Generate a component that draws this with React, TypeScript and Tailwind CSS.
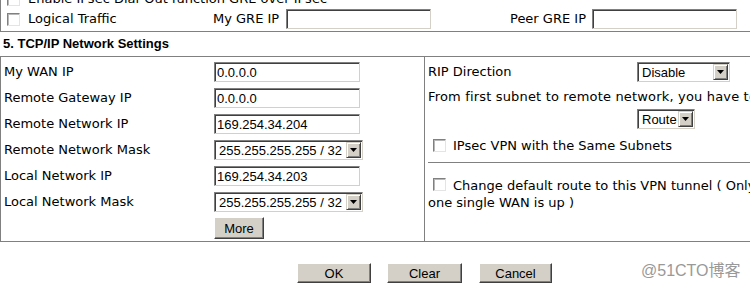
import React from "react";

function Checkbox({ className = "" }: { className?: string }) {
  return (
    <span
      className={`inline-block w-[13px] h-[13px] shrink-0 bg-white border border-t-[#808080] border-l-[#808080] border-r-[#e4e4e4] border-b-[#e4e4e4] shadow-[inset_1px_1px_0_#b8b8b8] ${className}`}
    />
  );
}

function TextBox({ value = "", w }: { value?: string; w: string }) {
  return (
    <div
      className={`${w} h-[20px] shrink-0 flex items-center bg-white border border-t-[#808080] border-l-[#808080] border-r-[#d4d0c8] border-b-[#d4d0c8] shadow-[inset_1px_1px_0_#404040] pl-[2px] font-['Liberation_Sans',Arial,sans-serif] text-[13px] leading-none`}
    >
      {value}
    </div>
  );
}

function Select({ value, w }: { value: string; w: string }) {
  return (
    <div
      className={`${w} h-[20px] shrink-0 flex items-center bg-white border border-t-[#808080] border-l-[#808080] border-r-[#d4d0c8] border-b-[#d4d0c8] shadow-[inset_1px_1px_0_#404040] pl-[4px] pr-[1px] pt-[1px] pb-[1px] font-['Liberation_Sans',Arial,sans-serif] text-[13px] leading-none`}
    >
      <span className="flex-1 whitespace-nowrap overflow-hidden">{value}</span>
      <span className="w-[15px] h-[16px] shrink-0 bg-[#d4d0c8] border border-t-[#d4d0c8] border-l-[#d4d0c8] border-r-[#404040] border-b-[#404040] shadow-[inset_1px_1px_0_#ffffff,inset_-1px_-1px_0_#808080] flex items-center justify-center">
        <svg width="7" height="4" viewBox="0 0 7 4">
          <path d="M0 0h7L3.5 4z" fill="#000" />
        </svg>
      </span>
    </div>
  );
}

function Button({ label, w, h }: { label: string; w: string; h: string }) {
  return (
    <div
      className={`${w} ${h} shrink-0 flex items-center justify-center bg-[#d4d0c8] border border-t-[#ffffff] border-l-[#ffffff] border-r-[#404040] border-b-[#404040] shadow-[inset_-1px_-1px_0_#808080] font-['Liberation_Sans',Arial,sans-serif] text-[13px] leading-none text-black`}
    >
      {label}
    </div>
  );
}

const leftRows: { label: string; kind: "input" | "select"; value: string }[] = [
  { label: "My WAN IP", kind: "input", value: "0.0.0.0" },
  { label: "Remote Gateway IP", kind: "input", value: "0.0.0.0" },
  { label: "Remote Network IP", kind: "input", value: "169.254.34.204" },
  { label: "Remote Network Mask", kind: "select", value: "255.255.255.255 / 32" },
  { label: "Local Network IP", kind: "input", value: "169.254.34.203" },
  { label: "Local Network Mask", kind: "select", value: "255.255.255.255 / 32" },
];

export default function App() {
  return (
    <div className="w-[750px] h-[287px] overflow-hidden bg-white relative text-black font-['DejaVu_Sans',Verdana,sans-serif] text-[13px]">
      {/* top section (GRE) */}
      <div className="h-[32px] border-l border-b border-[#808080] flex flex-col justify-end overflow-hidden">
        <div className="h-[22px] shrink-0 flex items-center translate-y-[3px]">
          <Checkbox className="ml-[6px]" />
          <span className="ml-[8px] whitespace-nowrap">Enable IPsec Dial-Out function GRE over IPsec</span>
        </div>
        <div className="h-[24px] shrink-0 flex items-center">
          <div className="w-[212px] shrink-0 flex items-center">
            <Checkbox className="ml-[6px]" />
            <span className="ml-[8px] whitespace-nowrap">Logical Traffic</span>
          </div>
          <div className="w-[297px] shrink-0 flex items-center">
            <span className="w-[73px] shrink-0 whitespace-nowrap">My GRE IP</span>
            <TextBox w="w-[145px]" />
          </div>
          <div className="flex items-center">
            <span className="w-[82px] shrink-0 whitespace-nowrap">Peer GRE IP</span>
            <TextBox w="w-[145px]" />
          </div>
        </div>
      </div>

      {/* section title */}
      <div className="h-[24px] pl-[3px] flex items-center font-['Liberation_Sans',Arial,sans-serif] font-bold text-[13px]">
        5. TCP/IP Network Settings
      </div>

      {/* table */}
      <div className="flex border-t border-l border-b border-[#808080] w-[900px]">
        <div className="w-[424px] shrink-0 border-r border-[#808080] pt-[2px] pl-[3px]">
          {leftRows.map((r) => (
            <div key={r.label} className="h-[26px] flex items-center">
              <span className="w-[210px] shrink-0 whitespace-nowrap">{r.label}</span>
              {r.kind === "input" ? (
                <TextBox w="w-[146px]" value={r.value} />
              ) : (
                <Select w="w-[149px]" value={r.value} />
              )}
            </div>
          ))}
          <div className="h-[26px] flex items-center">
            <span className="w-[210px] shrink-0" />
            <Button label="More" w="w-[50px]" h="h-[22px]" />
          </div>
        </div>
        <div className="flex-1 pt-[2px] pl-[3px]">
          <div className="h-[26px] flex items-center">
            <span className="w-[209px] shrink-0 whitespace-nowrap">RIP Direction</span>
            <Select w="w-[93px]" value="Disable" />
          </div>
          <div className="h-[24px] flex items-center whitespace-nowrap tracking-[0.17px]">
            From first subnet to remote network, you have to do
          </div>
          <div className="h-[20px] flex items-center pl-[209px]">
            <Select w="w-[58px]" value="Route" />
          </div>
          <div className="h-[33px] flex items-center">
            <Checkbox className="ml-[5px]" />
            <span className="ml-[7px] whitespace-nowrap">IPsec VPN with the Same Subnets</span>
          </div>
          <div className="border-t border-[#808080] pt-[14px] leading-[17px] whitespace-nowrap">
            <span className="inline-flex items-center">
              <Checkbox className="ml-[5px] translate-y-[1px]" />
            </span>
            <span className="ml-[7px]">Change default route to this VPN tunnel ( Only</span>
            <br />
            one single WAN is up )
          </div>
        </div>
      </div>

      {/* buttons */}
      <div className="mt-[21px] pl-[297px] flex items-center">
        <Button label="OK" w="w-[74px]" h="h-[20px]" />
        <div className="w-[16px] shrink-0" />
        <Button label="Clear" w="w-[75px]" h="h-[20px]" />
        <div className="w-[17px] shrink-0" />
        <Button label="Cancel" w="w-[73px]" h="h-[20px]" />
      </div>

      <div className="absolute left-[641px] top-[261px] text-[16px] leading-[20px] text-[#999999] font-['Liberation_Sans','Noto_Sans_CJK_SC',sans-serif] whitespace-nowrap">
        @51CTO博客
      </div>
    </div>
  );
}
